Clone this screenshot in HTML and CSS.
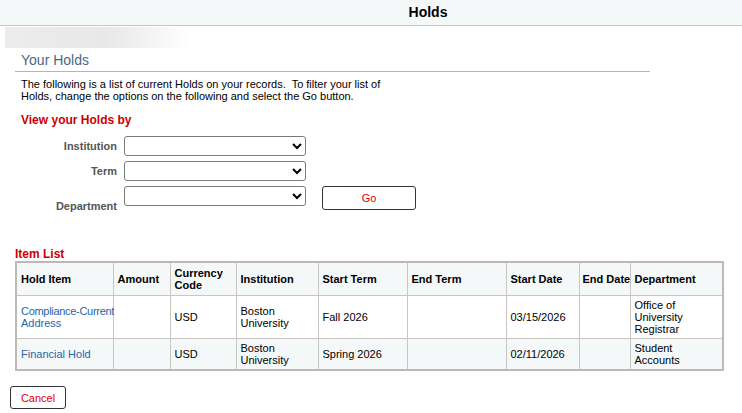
FILE: index.html
```html
<!DOCTYPE html>
<html>
  <head>
    <title>Holds</title>
    <link rel="stylesheet" href="styles.css">
  </head>
  <body>
    <header class="page-header">Holds</header>
    <div class="blur-bar"></div>

    <section class="content">
      <h2 class="section-title">Your Holds</h2>
      <p class="intro">
        The following is a list of current Holds on your records.&nbsp; To filter your list of
        Holds, change the options on the following and select the Go button.
      </p>

      <h3 class="red-title">View your Holds by</h3>

      <form class="filter-form">
        <div class="filter-fields">
          <label for="institution" class="field-label">Institution</label>
          <select id="institution" class="field-select"><option></option></select>

          <label for="term" class="field-label">Term</label>
          <select id="term" class="field-select"><option></option></select>

          <label for="department" class="field-label label-low">Department</label>
          <select id="department" class="field-select"><option></option></select>
        </div>
        <button type="button" class="btn go-btn">Go</button>
      </form>

      <h3 class="red-title list-title">Item List</h3>
      <table class="item-table">
        <colgroup>
          <col style="width: 97px" />
          <col style="width: 57px" />
          <col style="width: 66px" />
          <col style="width: 82px" />
          <col style="width: 89px" />
          <col style="width: 99px" />
          <col style="width: 73px" />
          <col style="width: 51px" />
          <col style="width: 93px" />
        </colgroup>
        <thead>
          <tr>
            <th>Hold Item</th>
            <th>Amount</th>
            <th>Currency Code</th>
            <th>Institution</th>
            <th>Start Term</th>
            <th>End Term</th>
            <th>Start Date</th>
            <th class="nowrap">End Date</th>
            <th>Department</th>
          </tr>
        </thead>
        <tbody>
          <tr class="row-tall">
            <td><a href="#"><span class="nowrap tight">Compliance-Current</span> Address</a></td>
            <td></td>
            <td>USD</td>
            <td>Boston University</td>
            <td>Fall 2026</td>
            <td></td>
            <td>03/15/2026</td>
            <td></td>
            <td>Office of University Registrar</td>
          </tr>
          <tr class="row-alt">
            <td><a href="#">Financial Hold</a></td>
            <td></td>
            <td>USD</td>
            <td>Boston University</td>
            <td>Spring 2026</td>
            <td></td>
            <td>02/11/2026</td>
            <td></td>
            <td>Student Accounts</td>
          </tr>
        </tbody>
      </table>

      <button type="button" class="btn cancel-btn">Cancel</button>
    </section>
  </body>
</html>
```

FILE: styles.css
```css
body {
  margin: 0;
  font-family: "Liberation Sans", Arial, Helvetica, sans-serif;
  font-size: 11px;
  color: #000;
  background-color: #fff;
}

.page-header {
  height: 25px;
  line-height: 25px;
  padding-left: 114px;
  text-align: center;
  font-size: 14px;
  font-weight: bold;
  color: #000;
  background-color: #f5f8f9;
  border-bottom: 1px solid #c4c4c4;
}

.blur-bar {
  margin: 1px 0 0 5px;
  width: 185px;
  height: 21px;
  background: linear-gradient(to right, #ececec 0%, #e8e8e8 55%, #ffffff 100%);
}

.content {
  padding: 0 0 0 15px;
}

.section-title {
  margin: 4px 0 0 0;
  width: 629px;
  padding: 0 0 3px 6px;
  font-size: 14px;
  font-weight: normal;
  line-height: 16px;
  color: #4a6786;
  border-bottom: 1px solid #b5b5b5;
}

.intro {
  margin: 6px 0 0 6px;
  width: 362px;
  line-height: 12px;
}

.red-title {
  margin: 11px 0 0 6px;
  font-size: 12px;
  font-weight: bold;
  line-height: 14px;
  color: #cc0000;
}

.filter-form {
  display: flex;
  align-items: flex-end;
  margin-top: 9px;
}

.filter-fields {
  display: grid;
  grid-template-columns: 102px 182px;
  grid-auto-rows: 20px;
  column-gap: 7px;
  row-gap: 5px;
  align-items: center;
}

.field-label {
  text-align: right;
  font-weight: bold;
  color: #555;
}

.label-low {
  align-self: end;
  margin-bottom: -6px;
}

.field-select {
  width: 182px;
  height: 20px;
  margin: 0;
  font-family: inherit;
  font-size: 11px;
  border: 1px solid #7a7a7a;
  border-radius: 3px;
  background-color: #fff;
}

.btn {
  font-family: inherit;
  font-size: 11px;
  color: #e00000;
  background-color: #fff;
  border: 1px solid #333;
  border-radius: 3px;
  cursor: pointer;
}

.go-btn {
  width: 94px;
  height: 24px;
  margin: 0 0 -4px 16px;
}

.list-title {
  margin: 41px 0 0 0;
}

.item-table {
  width: 708px;
  table-layout: fixed;
  border-collapse: collapse;
  border: 2px solid #bdb9b5;
}

.item-table th,
.item-table td {
  border: 1px solid #c9c5c1;
  padding: 0 2px 0 4px;
  text-align: left;
  font-size: 11px;
  line-height: 12px;
}

.item-table th {
  height: 32px;
  font-weight: bold;
  background-color: #f5f8f9;
}

.item-table th.nowrap {
  padding-left: 3px;
}

.nowrap {
  white-space: nowrap;
}

.tight {
  letter-spacing: -0.3px;
}

.row-tall td {
  height: 42px;
}

.row-alt td {
  height: 30px;
  background-color: #f5f8f9;
}

.item-table a {
  color: #2865a8;
  text-decoration: none;
}

.cancel-btn {
  display: block;
  width: 56px;
  height: 23px;
  margin: 15px 0 0 -5px;
}
```
